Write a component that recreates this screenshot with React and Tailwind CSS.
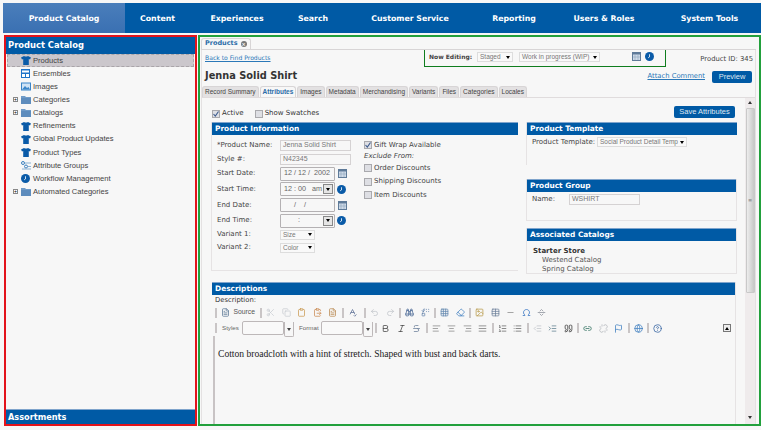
import { Undo2, Redo2, Scissors, Copy, Clipboard, ClipboardPaste, FileText, Binoculars, Replace, Grid3x3, Eraser, Image, Table, Minus, Omega, SeparatorHorizontal, AlignLeft, AlignCenter, AlignRight, AlignJustify, ListOrdered, List, Outdent, Indent, Quote, Link2, Unlink, Flag, Globe, HelpCircle, Strikethrough, Bold, Italic, SpellCheck } from 'lucide-react';

const NAV = [
    ['Product Catalog', 'w-[122px] bg-gradient-to-b from-[#4a7ebb] to-[#3a70b2]'],
    ['Content', 'w-[65px]'],
    ['Experiences', 'w-[94px]'],
    ['Search', 'w-[58px]'],
    ['Customer Service', 'w-[136px]'],
    ['Reporting', 'w-[72px]'],
    ['Users & Roles', 'w-[108px]'],
    ['System Tools', 'w-[103px]'],
];

const TREE = [
    ['Products', 'shirt', false],
    ['Ensembles', 'ensemble', false],
    ['Images', 'image', false],
    ['Categories', 'folder', true],
    ['Catalogs', 'folder', true],
    ['Refinements', 'shirt', false],
    ['Global Product Updates', 'shirt', false],
    ['Product Types', 'shirt', false],
    ['Attribute Groups', 'attr', false],
    ['Workflow Management', 'clock', false],
    ['Automated Categories', 'folder', true],
];

const TABS = ['Record Summary', 'Attributes', 'Images', 'Metadata', 'Merchandising', 'Variants', 'Files', 'Categories', 'Locales'];

function Shirt() {
    return (
        <svg width="10" height="9" viewBox="0 0 10 9" className="shrink-0">
            <path d="M3 0 L0 1.5 L1 3.5 L2.2 3 L2.2 9 L7.8 9 L7.8 3 L9 3.5 L10 1.5 L7 0 Q5 1.2 3 0Z" fill="#0a5ba8" />
        </svg>
    );
}

function ClockIcon({ size = 9 }) {
    return (
        <svg width={size} height={size} viewBox="0 0 10 10" className="shrink-0">
            <circle cx="5" cy="5" r="5" fill="#0a5ba8" />
            <path d="M5 2.5 V5.5 L3.5 6.5" stroke="#fff" strokeWidth="0.9" fill="none" />
        </svg>
    );
}

function Calendar() {
    return (
        <svg width="9" height="9" viewBox="0 0 9 9" className="shrink-0">
            <rect x="0.5" y="0.5" width="8" height="8" fill="#cfdbe8" stroke="#5f7b99" />
            <rect x="0.5" y="0.5" width="8" height="2" fill="#5f7b99" />
            <path d="M3 3 V8 M6 3 V8 M1 5 H8" stroke="#8ea5bd" strokeWidth="0.6" />
        </svg>
    );
}

function TreeIcon({ kind }) {
    if (kind === 'shirt') return <Shirt />;
    if (kind === 'clock') return <ClockIcon />;
    if (kind === 'ensemble') {
        return (
            <svg width="9" height="9" viewBox="0 0 9 9" className="shrink-0">
                <rect width="9" height="9" fill="#1e73c8" />
                <rect x="1" y="1.5" width="7" height="2" fill="#fff" />
                <rect x="1" y="5" width="3" height="3" fill="#fff" />
                <rect x="5" y="5" width="3" height="3" fill="#fff" />
            </svg>
        );
    }
    if (kind === 'image') {
        return (
            <svg width="10" height="9" viewBox="0 0 10 9" className="shrink-0">
                <rect x="0.5" y="1" width="9" height="7" fill="#cfe3f5" stroke="#3b86c9" />
                <path d="M1 7.5 L4 4 L6 6 L7.5 5 L9 7.5Z" fill="#3b86c9" />
            </svg>
        );
    }
    if (kind === 'attr') {
        return (
            <svg width="10" height="9" viewBox="0 0 10 9" className="shrink-0">
                <circle cx="2" cy="2" r="1.5" fill="none" stroke="#3b7fbe" />
                <circle cx="5" cy="5.5" r="1.5" fill="none" stroke="#3b7fbe" />
                <path d="M4 2 H10 M7 5.5 H10 M1 8 H10" stroke="#7ea8cf" strokeWidth="0.9" />
            </svg>
        );
    }
    return (
        <svg width="10" height="9" viewBox="0 0 10 9" className="shrink-0">
            <path d="M0 1 H4 L5 2 H10 V9 H0Z" fill="#6f9bc8" />
            <rect y="3" width="10" height="6" fill="#5d8cbd" />
        </svg>
    );
}

function Check({ on }) {
    return (
        <span className="flex h-[8px] w-[8px] shrink-0 items-center justify-center border border-[#a9a9ad] bg-[#dedfe4]">
            {on && (
                <svg width="6" height="6" viewBox="0 0 6 6">
                    <path d="M0.5 3 L2.3 5 L5.5 0.5" stroke="#3c5a8c" strokeWidth="1.1" fill="none" />
                </svg>
            )}
        </span>
    );
}

function Select({ label, className }) {
    return (
        <span className={"flex h-[10px] shrink-0 items-center border border-[#dddddd] bg-[#f9f9f9] px-[2px] font-['Liberation_Sans',sans-serif] text-[6.5px] text-[#777] " + className}>
            <span className="min-w-0 flex-1 whitespace-nowrap">{label}</span>
            <span className="ml-[1px] h-0 w-0 shrink-0 border-x-[2.5px] border-t-[3px] border-x-transparent border-t-black" />
        </span>
    );
}

function SectionHead({ title }) {
    return (
        <div className="flex h-[13px] items-center border-t border-[#7fa4cc] bg-[#005aa5] pl-[3px] text-[7.4px] font-bold text-white">
            {title}
        </div>
    );
}

function FieldRow({ label, height, children }) {
    return (
        <div className="flex items-center" style={{ height }}>
            <span className="w-[63px] shrink-0 whitespace-nowrap">{label}</span>
            {children}
        </div>
    );
}

function DropBtn() {
    return (
        <span className="flex h-[10px] w-[10px] shrink-0 items-center justify-center border border-[#888] bg-[#e5e5e5]">
            <span className="h-0 w-0 border-x-[2.5px] border-t-[3px] border-x-transparent border-t-black" />
        </span>
    );
}

function DateBox({ text, drop }) {
    return (
        <span className="flex h-[14px] w-[55px] items-center justify-between rounded-[1px] border border-[#b4b1b3] pl-[3px] pr-[1px] font-['Liberation_Sans',sans-serif] text-[7.2px] text-[#666]">
            <span className="whitespace-pre">{text}</span>
            {drop && <DropBtn />}
        </span>
    );
}

function TextBox({ text }) {
    return (
        <span className="flex h-[11px] w-[71px] items-center border border-[#d5d2d3] pl-[2px] font-['Liberation_Sans',sans-serif] text-[7px] whitespace-nowrap text-[#777]">
            {text}
        </span>
    );
}

function Sep() {
    return <span className="mx-[1px] h-[10px] w-[2px] shrink-0 bg-[#c9c5c6]" />;
}

function Tool({ icon: Icon, color = '#6b7f99' }) {
    return (
        <span className="flex w-[15.5px] shrink-0 items-center justify-center">
            <Icon size={9} color={color} strokeWidth={2} />
        </span>
    );
}

function EditorSelect() {
    return (
        <span className="flex h-[14px] w-[52px] shrink-0 items-stretch">
            <span className="flex-1 rounded-[2px] border border-[#bdb8b9] bg-[#f9f9f9]" />
            <span className="mt-[1px] flex h-[15px] w-[10px] items-center justify-center rounded-b-[2px] border border-t-0 border-[#bdb8b9]">
                <span className="h-0 w-0 border-x-[2px] border-t-[3px] border-x-transparent border-t-[#444]" />
            </span>
        </span>
    );
}

export default function App() {
    return (
        <div className="h-[430px] w-[761px] overflow-hidden bg-[#f7f7f7] pt-[3px] pl-[3px] font-['DejaVu_Sans',sans-serif] text-[7px] text-[#333]">
            <nav className="flex h-[30px] bg-[#005aa5] pt-[1px] text-[7.8px] font-bold text-white">
                {NAV.map(([name, cls]) => (
                    <span key={name} className={'-mt-[1px] flex shrink-0 items-center justify-center pt-[1px] whitespace-nowrap ' + cls}>
                        {name}
                    </span>
                ))}
            </nav>

            <div className="mt-[2px] flex h-[391px] pl-[1px]">
                {/* left tree */}
                <aside className="flex w-[193px] shrink-0 flex-col border-2 border-[#e3131b] bg-[#f7f7f7]">
                    <div className="flex h-[17px] shrink-0 items-center bg-[#005aa5] pl-[2px] text-[8.4px] font-bold text-white">
                        Product Catalog
                    </div>
                    <ul className="flex-1 px-[1px] font-['Liberation_Sans',sans-serif] text-[7.6px] text-[#444]">
                        {TREE.map(([name, kind, expand], i) => (
                            <li
                                key={name}
                                className={
                                    'flex h-[13.1px] items-center border ' +
                                    (i === 0 ? 'border-dashed border-[#a9a5a9] bg-[#cbc7cc]' : 'border-transparent')
                                }
                            >
                                <span className="flex w-[10px] shrink-0 justify-end">
                                    {expand && (
                                        <span className="flex h-[5px] w-[5px] items-center justify-center border border-[#888] bg-white text-[5px] leading-none text-black">
                                            +
                                        </span>
                                    )}
                                </span>
                                <span className="ml-[3px] flex w-[12px] shrink-0">
                                    <TreeIcon kind={kind} />
                                </span>
                                <span className="whitespace-nowrap">{name}</span>
                            </li>
                        ))}
                    </ul>
                    <div className="flex h-[15px] shrink-0 items-center border-t border-[#7fa4cc] bg-[#005aa5] pl-[2px] text-[8.2px] font-bold text-white">
                        Assortments
                    </div>
                </aside>

                {/* main panel */}
                <main className="ml-[1px] flex w-[563px] shrink-0 flex-col border-2 border-[#22a03c] bg-[#f7f7f7] pl-[1px] pr-[3px]">
                    <div className="flex h-[13px] shrink-0 items-end border-b border-[#d8d5d6]">
                        <span className="flex h-[11px] items-center gap-[3px] rounded-t-[3px] border border-b-0 border-[#d8d5d6] px-[3px] text-[6.5px] font-bold text-[#2b6ca8]">
                            Products
                            <span className="flex h-[6px] w-[6px] items-center justify-center rounded-full bg-[#777] text-[5px] leading-none text-white">×</span>
                        </span>
                    </div>

                    <div className="flex min-h-0 flex-1 flex-col border-x border-[#e4e1e2]">
                        <div className="flex h-[17px] shrink-0 items-start">
                            <a className="mt-[3px] w-[222px] shrink-0 pl-[3px] text-[6.1px] text-[#2b78b8] underline">Back to Find Products</a>
                            <div className="flex h-[17px] w-[242px] shrink-0 items-start border-x border-b-[1.5px] border-[#0f7d1e] pl-[4px] pt-[2px]">
                                <span className="w-[48px] shrink-0 text-[6px] leading-[10px] font-bold whitespace-nowrap text-[#444]">Now Editing:</span>
                                <Select label="Staged" className="mr-[6px] w-[36px]" />
                                <Select label="Work in progress (WIP)" className="mr-[32px] w-[81px]" />
                                <span className="mr-[4px] flex"><Calendar /></span>
                                <ClockIcon />
                            </div>
                            <span className="ml-auto mt-[4px] pr-[2px] text-[6.8px] text-[#444]">Product ID: 345</span>
                        </div>

                        <div className="flex h-[19px] shrink-0 items-center pl-[3px] pr-[3px]">
                            <h1 className="text-[9.8px] font-bold text-[#333]">Jenna Solid Shirt</h1>
                            <a className="ml-auto mr-[7px] text-[6.8px] text-[#2b78b8] underline">Attach Comment</a>
                            <span className="flex h-[12px] w-[40px] items-center justify-center rounded-[2px] bg-[#005aa5] font-['Liberation_Sans',sans-serif] text-[7.5px] text-[#dfe8f2]">
                                Preview
                            </span>
                        </div>

                        <div className="flex h-[12px] shrink-0 items-end gap-[1px] border-b border-[#e0dcdd] font-['Liberation_Sans',sans-serif] text-[6.5px]">
                            {TABS.map((tab) => (
                                <span
                                    key={tab}
                                    className={
                                        'flex h-[11px] items-center rounded-t-[3px] border border-b-0 border-[#d8d5d6] px-[2px] whitespace-nowrap ' +
                                        (tab === 'Attributes' ? 'bg-[#f7f7f7] font-bold text-[#2b6ca8]' : 'bg-[#e3e1e2] text-[#444]')
                                    }
                                >
                                    {tab}
                                </span>
                            ))}
                        </div>

                        <div className="flex min-h-0 flex-1">
                            <div className="min-w-0 flex-1 overflow-hidden pl-[9px] pr-[9px]">
                                <div className="flex h-[24px] items-end pb-[4px] pl-[1px]">
                                    <Check on />
                                    <span className="ml-[2px] mr-[11px]">Active</span>
                                    <Check />
                                    <span className="ml-[2px]">Show Swatches</span>
                                    <span className="ml-auto mr-[1px] flex h-[12px] w-[61px] items-center justify-center rounded-[2px] bg-[#005aa5] font-['Liberation_Sans',sans-serif] text-[7.5px] whitespace-nowrap text-[#dfe8f2]">
                                        Save Attributes
                                    </span>
                                </div>

                                <div className="flex gap-[8px]">
                                    <section className="h-[149px] w-[307px] shrink-0 border-b border-l border-[#e6e3e4]">
                                        <SectionHead title="Product Information" />
                                        <div className="flex pl-[5px] pt-[3px]">
                                            <div className="w-[147px] shrink-0 text-[#444]">
                                                <FieldRow label="*Product Name:" height={14}>
                                                    <TextBox text="Jenna Solid Shirt" />
                                                </FieldRow>
                                                <FieldRow label="Style #:" height={14}>
                                                    <TextBox text="N42345" />
                                                </FieldRow>
                                                <FieldRow label="Start Date:" height={15}>
                                                    <DateBox text="12 / 12 /  2002" />
                                                    <span className="ml-[3px]"><Calendar /></span>
                                                </FieldRow>
                                                <FieldRow label="Start Time:" height={16}>
                                                    <DateBox text="12 : 00   am" drop />
                                                    <span className="ml-[2px]"><ClockIcon /></span>
                                                </FieldRow>
                                                <FieldRow label="End Date:" height={16}>
                                                    <DateBox text="     /    /" />
                                                    <span className="ml-[3px]"><Calendar /></span>
                                                </FieldRow>
                                                <FieldRow label="End Time:" height={15}>
                                                    <DateBox text="       :" drop />
                                                    <span className="ml-[2px]"><ClockIcon /></span>
                                                </FieldRow>
                                                <FieldRow label="Variant 1:" height={13}>
                                                    <Select label="Size" className="w-[35px]" />
                                                </FieldRow>
                                                <FieldRow label="Variant 2:" height={13}>
                                                    <Select label="Color" className="w-[35px]" />
                                                </FieldRow>
                                            </div>
                                            <div className="pt-[1px] text-[#444]">
                                                <div className="flex h-[12px] items-center gap-[2px]"><Check on />Gift Wrap Available</div>
                                                <div className="flex h-[10px] items-center italic">Exclude From:</div>
                                                <div className="flex h-[13.5px] items-center gap-[2px]"><Check />Order Discounts</div>
                                                <div className="flex h-[14px] items-center gap-[2px]"><Check />Shipping Discounts</div>
                                                <div className="flex h-[13.5px] items-center gap-[2px]"><Check />Item Discounts</div>
                                            </div>
                                        </div>
                                    </section>

                                    <div className="w-[211px] shrink-0">
                                        <section className="h-[43px] border-l border-[#e6e3e4]">
                                            <SectionHead title="Product Template" />
                                            <div className="flex h-[14px] items-center pl-[5px] text-[#444]">
                                                <span className="w-[65px] shrink-0 whitespace-nowrap">Product Template:</span>
                                                <Select label="Social Product Detail Temp" className="w-[90px]" />
                                            </div>
                                        </section>
                                        <section className="mt-[14px] h-[42px] border border-t-0 border-[#e6e3e4]">
                                            <SectionHead title="Product Group" />
                                            <div className="flex h-[15px] items-center pl-[5px] text-[#444]">
                                                <span className="w-[37px] shrink-0">Name:</span>
                                                <TextBox text="WSHIRT" />
                                            </div>
                                        </section>
                                        <section className="mt-[7px] h-[46px] border border-t-0 border-[#e6e3e4]">
                                            <SectionHead title="Associated Catalogs" />
                                            <div className="pl-[6px] pt-[6px] leading-[9px] text-[#555]">
                                                <div className="font-bold text-[#333]">Starter Store</div>
                                                <div className="pl-[9px]">Westend Catalog</div>
                                                <div className="pl-[9px]">Spring Catalog</div>
                                            </div>
                                        </section>
                                    </div>
                                </div>

                                <section className="ml-[1px] mt-[8px] h-[200px] border-r border-[#e6e3e4]">
                                    <SectionHead title="Descriptions" />
                                    <div className="pl-[3px] text-[6.8px] leading-[10px] text-[#333]">Description:</div>
                                    <div className="flex h-[15px] items-center pl-[2px] font-['Liberation_Sans',sans-serif] text-[6.8px] text-[#555]">
                                        <Sep />
                                        <Tool icon={FileText} color="#5c7896" />
                                        <span className="mr-[4px] whitespace-nowrap">Source</span>
                                        <Sep />
                                        <Tool icon={Scissors} color="#c8ccd2" />
                                        <Tool icon={Copy} color="#c8ccd2" />
                                        <Tool icon={Clipboard} color="#c99a52" />
                                        <Tool icon={ClipboardPaste} color="#c98a52" />
                                        <Tool icon={FileText} color="#b98a52" />
                                        <Sep />
                                        <Tool icon={SpellCheck} color="#5c6f96" />
                                        <span className="w-[3px] shrink-0" />
                                        <Sep />
                                        <Tool icon={Undo2} color="#c0c4ca" />
                                        <Tool icon={Redo2} color="#c0c4ca" />
                                        <Sep />
                                        <Tool icon={Binoculars} color="#3f5f8f" />
                                        <Tool icon={Replace} color="#5f7fa8" />
                                        <Sep />
                                        <Tool icon={Grid3x3} color="#5f86ad" />
                                        <Tool icon={Eraser} color="#3f7fc0" />
                                        <Sep />
                                        <Tool icon={Image} color="#b89a4a" />
                                        <Tool icon={Table} color="#6b7f99" />
                                        <Tool icon={Minus} color="#8a8a8a" />
                                        <Tool icon={Omega} color="#2f6fc0" />
                                        <Tool icon={SeparatorHorizontal} color="#8a8f99" />
                                    </div>
                                    <div className="flex h-[16px] items-center pl-[2px] font-['Liberation_Sans',sans-serif] text-[6.8px] text-[#666]">
                                        <Sep />
                                        <span className="ml-[4px] mr-[3px] w-[17px] shrink-0 text-[6.2px]">Styles</span>
                                        <EditorSelect />
                                        <span className="ml-[5px] mr-[3px] w-[19px] shrink-0 text-[6.2px]">Format</span>
                                        <EditorSelect />
                                        <span className="w-[1px] shrink-0" />
                                        <Sep />
                                        <Tool icon={Bold} color="#444" />
                                        <Tool icon={Italic} color="#444" />
                                        <Tool icon={Strikethrough} color="#6b7f99" />
                                        <Sep />
                                        <Tool icon={AlignLeft} color="#888" />
                                        <Tool icon={AlignCenter} color="#888" />
                                        <Tool icon={AlignRight} color="#888" />
                                        <Tool icon={AlignJustify} color="#777" />
                                        <Sep />
                                        <Tool icon={ListOrdered} color="#666" />
                                        <Tool icon={List} color="#666" />
                                        <Sep />
                                        <Tool icon={Outdent} color="#c0c4ca" />
                                        <Tool icon={Indent} color="#5f7f8f" />
                                        <Tool icon={Quote} color="#333" />
                                        <Sep />
                                        <Tool icon={Link2} color="#2f6f5f" />
                                        <Tool icon={Unlink} color="#b0b4ba" />
                                        <Tool icon={Flag} color="#3f7fc0" />
                                        <Sep />
                                        <Tool icon={Globe} color="#3f7fc0" />
                                        <Sep />
                                        <Tool icon={HelpCircle} color="#2f5f9f" />
                                        <span className="ml-auto mr-[4px] flex h-[8px] w-[8px] items-center justify-center border border-[#777] bg-[#eee]">
                                            <span className="h-0 w-0 border-x-[2px] border-b-[3px] border-x-transparent border-b-black" />
                                        </span>
                                    </div>
                                    <div className="ml-[1px] h-[100px] border-l-2 border-[#c8c3c4] pl-[3px] pt-[12px] font-['Liberation_Serif',serif] text-[9.6px] leading-[12px] text-[#222]">
                                        Cotton broadcloth with a hint of stretch. Shaped with bust and back darts.
                                    </div>
                                </section>
                            </div>

                            <div className="flex w-[10px] shrink-0 flex-col items-center bg-[#efebec] py-[2px]">
                                <span className="mt-[1px] h-0 w-0 border-x-[2px] border-b-[3px] border-x-transparent border-b-[#333]" />
                                <span className="mt-[4px] flex h-[185px] w-[9px] items-center justify-center rounded-[1px] border border-[#c9c9c9] bg-gradient-to-r from-[#ededed] to-[#c8c8c8] text-[5px] leading-none text-[#777]">≡</span>
                                <span className="mt-auto mb-[3px] h-0 w-0 border-x-[2px] border-t-[3px] border-x-transparent border-t-[#333]" />
                            </div>
                        </div>
                    </div>
                </main>
            </div>
        </div>
    );
}
